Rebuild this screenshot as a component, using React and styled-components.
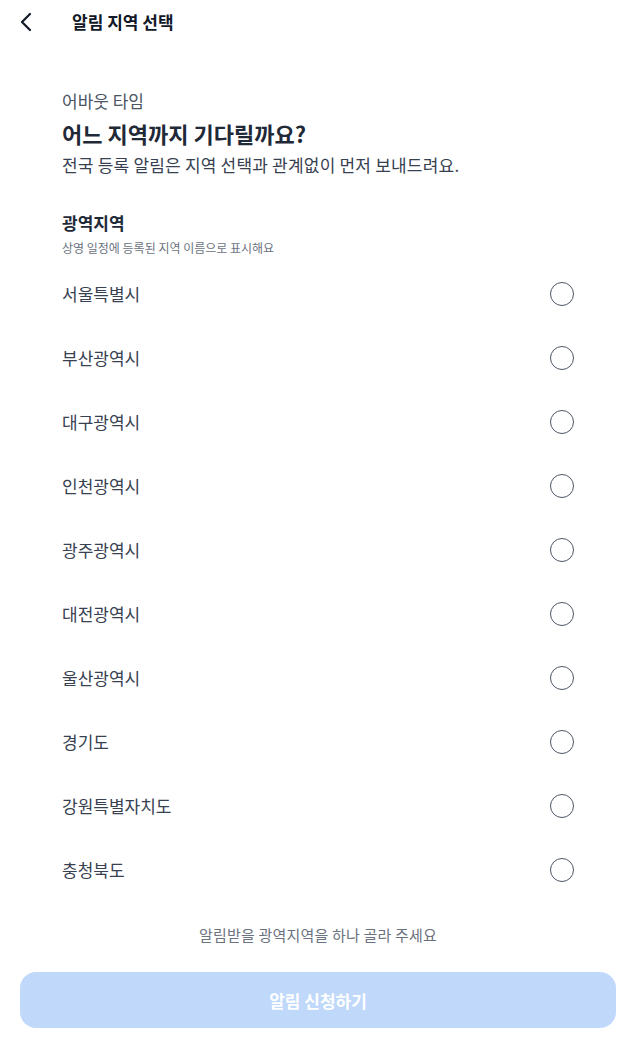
import React, { useState } from "react";
import styled, { createGlobalStyle } from "styled-components";

const GlobalStyle = createGlobalStyle`
  html, body { margin: 0; padding: 0; background: #ffffff; }
  body { font-family: "Noto Sans CJK KR", "Noto Sans", sans-serif; -webkit-font-smoothing: antialiased; }
  * { box-sizing: border-box; }
`;

const Page = styled.div`
  width: 636px;
  height: 1048px;
  display: flex;
  flex-direction: column;
  background: #fff;
  overflow: hidden;
`;

const Header = styled.header`
  height: 44px;
  display: flex;
  align-items: center;
  padding-left: 10px;
  gap: 30px;
  flex-shrink: 0;
`;

const BackButton = styled.button`
  width: 32px;
  height: 32px;
  border: none;
  background: none;
  padding: 0;
  display: flex;
  align-items: center;
  justify-content: center;
  color: #111827;
  cursor: pointer;
`;

const HeaderTitle = styled.h1`
  margin: 0;
  font-size: 17px;
  font-weight: 700;
  color: #111827;
  line-height: 24px;
`;

const Content = styled.main`
  flex: 1;
  display: flex;
  flex-direction: column;
  padding: 44px 62px 0;
`;

const Eyebrow = styled.div`
  font-size: 17px;
  line-height: 26px;
  color: #4b5563;
`;

const Title = styled.h2`
  margin: 3px 0 0;
  font-size: 22px;
  line-height: 32px;
  font-weight: 700;
  color: #1f2937;
`;

const Description = styled.p`
  margin: 3px 0 0;
  font-size: 17px;
  line-height: 26px;
  letter-spacing: 0.2px;
  color: #374151;
`;

const SectionLabel = styled.h3`
  margin: 32px 0 0;
  font-size: 17px;
  line-height: 26px;
  font-weight: 700;
  color: #1f2937;
`;

const Helper = styled.div`
  margin-top: 4px;
  font-size: 12px;
  line-height: 16px;
  color: #6b7280;
`;

const List = styled.ul`
  list-style: none;
  margin: 6px 0 0;
  padding: 0;
`;

const Row = styled.li`
  height: 64px;
  display: flex;
  align-items: center;
  justify-content: space-between;
  cursor: pointer;
`;

const RowLabel = styled.span`
  font-size: 17px;
  line-height: 26px;
  color: #374151;
`;

const Radio = styled.span`
  width: 24px;
  height: 24px;
  border-radius: 50%;
  border: 1.5px solid ${(p) => (p.$checked ? "#3b82f6" : "#4b5563")};
  display: flex;
  align-items: center;
  justify-content: center;
  &::after {
    content: "";
    width: 12px;
    height: 12px;
    border-radius: 50%;
    background: ${(p) => (p.$checked ? "#3b82f6" : "transparent")};
  }
`;

const Footer = styled.footer`
  flex-shrink: 0;
  display: flex;
  flex-direction: column;
  align-items: center;
  padding: 23px 20px 20px;
`;

const Note = styled.div`
  font-size: 15px;
  line-height: 20px;
  letter-spacing: 0.2px;
  color: #6b7280;
`;

const SubmitButton = styled.button`
  margin-top: 27px;
  width: 100%;
  height: 56px;
  border: none;
  border-radius: 16px;
  background: ${(p) => (p.disabled ? "#c0d9fb" : "#3b82f6")};
  color: #ffffff;
  font-family: inherit;
  font-size: 17px;
  font-weight: 700;
`;

const regions = [
  "서울특별시",
  "부산광역시",
  "대구광역시",
  "인천광역시",
  "광주광역시",
  "대전광역시",
  "울산광역시",
  "경기도",
  "강원특별자치도",
  "충청북도",
];

export default function App() {
  const [selected, setSelected] = useState(null);
  return (
    <>
      <GlobalStyle />
      <Page>
        <Header>
          <BackButton aria-label="뒤로">
            <svg width="14" height="20" viewBox="0 0 14 20" fill="none">
              <path d="M11 2 L3 10 L11 18" stroke="currentColor" strokeWidth="2.2" strokeLinecap="round" strokeLinejoin="round" />
            </svg>
          </BackButton>
          <HeaderTitle>알림 지역 선택</HeaderTitle>
        </Header>
        <Content>
          <Eyebrow>어바웃 타임</Eyebrow>
          <Title>어느 지역까지 기다릴까요?</Title>
          <Description>전국 등록 알림은 지역 선택과 관계없이 먼저 보내드려요.</Description>
          <SectionLabel>광역지역</SectionLabel>
          <Helper>상영 일정에 등록된 지역 이름으로 표시해요</Helper>
          <List>
            {regions.map((r) => (
              <Row key={r} onClick={() => setSelected(r)}>
                <RowLabel>{r}</RowLabel>
                <Radio $checked={selected === r} />
              </Row>
            ))}
          </List>
        </Content>
        <Footer>
          <Note>알림받을 광역지역을 하나 골라 주세요</Note>
          <SubmitButton disabled={!selected}>알림 신청하기</SubmitButton>
        </Footer>
      </Page>
    </>
  );
}
